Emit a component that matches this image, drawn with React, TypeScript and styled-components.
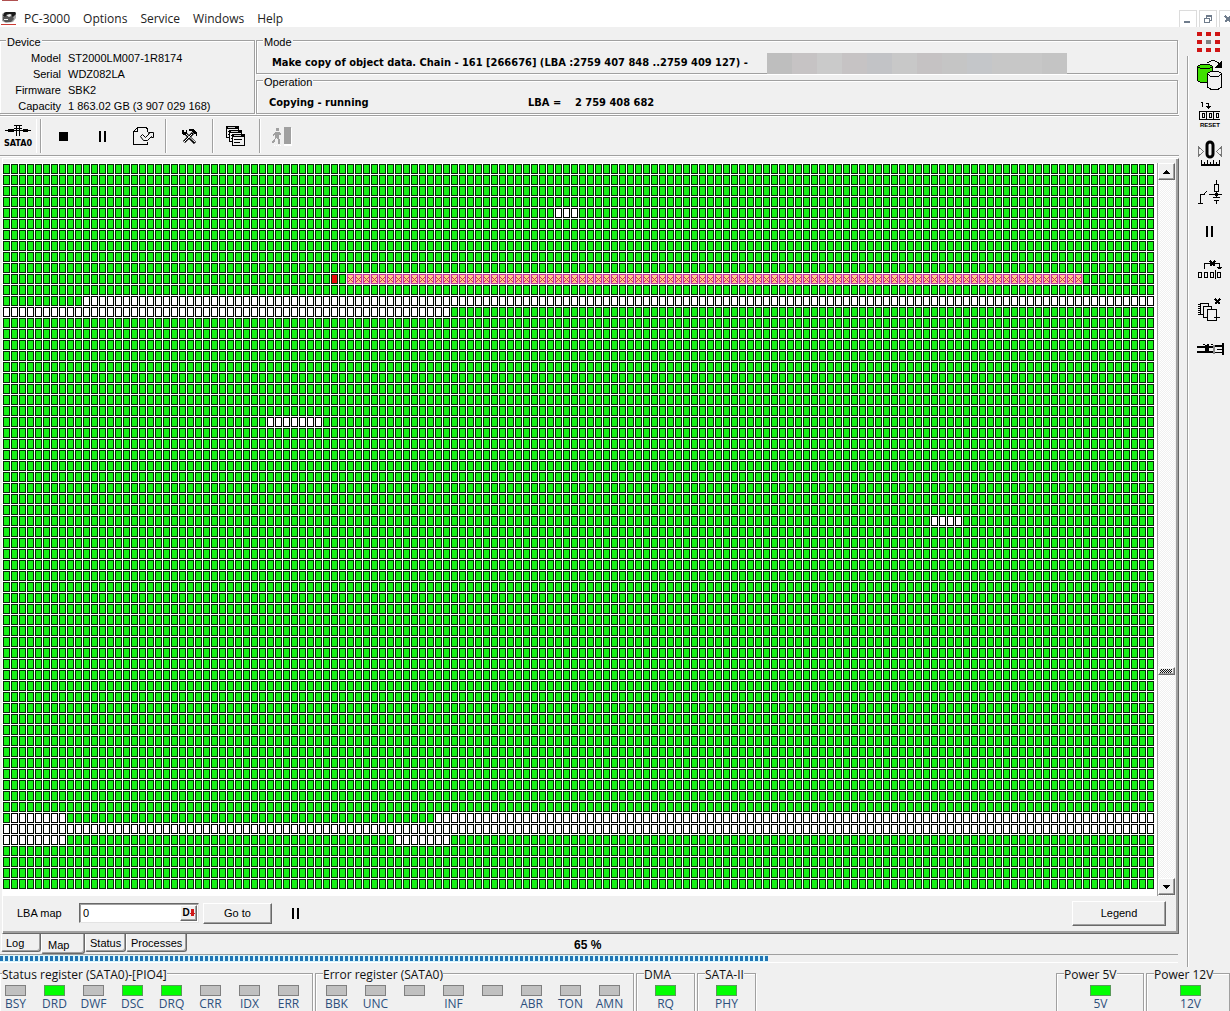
import React from "react";
import styled, { createGlobalStyle } from "styled-components";

const face = "#f0f0f0";
const shade = "#a0a0a0";
const dark = "#696969";
const green = "#16f016";
const uiFont = `"Open Sans", "Noto Sans", sans-serif`;
const sysFont = `"Liberation Sans", Arial, sans-serif`;

const GlobalStyle = createGlobalStyle`
  * { box-sizing: border-box; }
  body { margin: 0; background: ${face}; overflow: hidden; color: #000; font: 11px/16px ${sysFont}; }
  button, input { font: inherit; color: inherit; margin: 0; }
`;

const Window = styled.div`
  display: flex;
  flex-direction: column;
  height: 100vh;
  overflow: hidden;
`;

const MenuBar = styled.header`
  flex: none;
  display: flex;
  align-items: flex-end;
  height: 27px;
  background: #fff;
  overflow: hidden;
`;

const AppMark = styled.div`
  width: 17px;
  height: 27px;
`;

const Menu = styled.nav`
  flex: 1;
  display: flex;
`;

const MenuItem = styled.button`
  border: 0;
  background: none;
  padding: 0 6px 0 7px;
  font: 12px/16px ${uiFont};
  color: #222;
`;

const WindowButtons = styled.div`
  display: flex;
  gap: 2px;
  width: 51px;
  flex: none;
  overflow: hidden;
  height: 17px;
`;

const WindowButton = styled.button`
  flex: none;
  width: 18px;
  height: 18px;
  padding: 0;
  border: 1px solid #dcdcdc;
  border-bottom: 0;
  background: #fff;
`;

const Body = styled.div`
  flex: 1;
  min-height: 0;
  display: flex;
`;

const Main = styled.main`
  flex: 1;
  min-width: 0;
  display: flex;
  flex-direction: column;
`;

const InfoRow = styled.div`
  flex: none;
  display: flex;
  gap: 1px;
  padding: 13px 9px 0 0;
`;

const InfoColumn = styled.div`
  flex: 1;
  display: flex;
  flex-direction: column;
  gap: 6px;
`;

const Group = styled.section<{ $open?: boolean; $width?: number }>`
  border: 1px solid ${shade};
  box-shadow: 1px 1px 0 #fff, inset 1px 1px 0 #fff;
  flex: ${(p) => (p.$width ? "none" : "1")};
  width: ${(p) => (p.$width ? p.$width + "px" : "auto")};
  ${(p) => p.$open && "border-left: 0;"}
`;

const GroupTitle = styled.h2`
  width: fit-content;
  margin: -6px 0 0 6px;
  padding: 0 1px;
  background: ${face};
  font: 11px/14px ${sysFont};
`;

const DeviceList = styled.dl`
  display: grid;
  grid-template-columns: 61px 1fr;
  column-gap: 7px;
  margin: 1px 0 -1px;
`;

const Term = styled.dt`
  text-align: right;
`;

const Value = styled.dd`
  margin: 0;
`;

const BoldLine = styled.p<{ $indent: number }>`
  display: flex;
  height: 24px;
  margin: 0;
  padding-left: ${(p) => p.$indent}px;
  font: bold 11px/28px "DejaVu Sans Condensed", ${sysFont};
  white-space: pre;
`;

const LineCell = styled.span<{ $width?: number }>`
  width: ${(p) => (p.$width ? p.$width + "px" : "auto")};
`;

const Redacted = styled.span`
  width: 300px;
  height: 21px;
  margin-top: 4px;
  background: linear-gradient(
    90deg,
    #bebebe 0 25px, #c6c3c4 25px 50px, #cacaca 50px 75px, #c6c3c4 75px 100px,
    #c2c3c6 100px 125px, #c8c8c8 125px 150px, #c5c2c3 150px 175px, #c5c5c5 175px 200px,
    #c4c6c9 200px 225px, #c7c7c7 225px 275px, #c4c4c4 275px
  );
`;

const Toolbar = styled.div`
  flex: none;
  display: flex;
  align-items: stretch;
  height: 41px;
  margin: 1px 8px 0 0;
  border-top: 1px solid ${shade};
  border-bottom: 1px solid ${shade};
  box-shadow: inset 0 1px 0 #fff, 0 1px 0 #fff;
  padding: 3px 0 2px;
`;

const ToolGroup = styled.div<{ $width: number }>`
  display: flex;
  width: ${(p) => p.$width}px;
  align-items: center;
  justify-content: center;
  border-right: 1px solid ${shade};
  box-shadow: 1px 0 0 #fff;
  &:first-child { justify-content: flex-start; }
  &:last-child { border: 0; box-shadow: none; }
`;

const ToolButton = styled.button<{ $pressed?: boolean }>`
  display: flex;
  flex-direction: column;
  align-items: center;
  justify-content: center;
  gap: 2px;
  width: ${(p) => (p.$pressed ? 37 : 40)}px;
  height: 100%;
  padding: 0;
  border: 0;
  ${(p) => p.$pressed && "border-right: 1px solid #fff;"}
  background: none;
  font: bold 9px/9px "DejaVu Sans Condensed", ${sysFont};
`;

const MapPanel = styled.section`
  flex: 1;
  min-height: 0;
  display: flex;
  flex-direction: column;
  margin: 2px 8px 0 2px;
  padding-top: 4px;
  border-left: 1px solid #fff;
  border-top: 1px solid #fff;
  border-right: 1px solid ${dark};
  border-bottom: 1px solid ${dark};
  box-shadow: inset -2px -2px 0 ${shade};
`;

const MapArea = styled.div`
  flex: 1;
  min-height: 0;
  display: flex;
  justify-content: space-between;
  margin-right: 3px;
  background: #fff;
`;

const MapDrawing = styled.svg`
  flex: none;
  display: block;
  margin-top: 1px;
`;

const ScrollTrack = styled.div`
  flex: none;
  display: flex;
  flex-direction: column;
  width: 18px;
  padding-bottom: 1px;
  border-left: 1px solid ${shade};
  background: repeating-conic-gradient(#fff 0 25%, ${face} 0 50%) 0 0 / 2px 2px;
`;

const ScrollSpace = styled.div<{ $grow: number }>`
  flex: ${(p) => p.$grow} 1 0;
`;

const raised = `
  background: ${face};
  border: 1px solid #fff;
  border-right-color: ${dark};
  border-bottom-color: ${dark};
  box-shadow: inset -1px -1px 0 ${shade};
`;

const ScrollButton = styled.button`
  ${raised}
  flex: none;
  height: 17px;
  padding: 0;
  display: grid;
  place-items: center;
`;

const ScrollThumb = styled.div`
  ${raised}
  height: 8px;
  flex: none;
  padding: 1px 2px 1px 1px;
  &::before {
    content: "";
    display: block;
    height: 4px;
    background: repeating-conic-gradient(#111 0 25%, #eee 0 50%) 0 0 / 2px 2px;
  }
`;

const MapFooter = styled.form`
  flex: none;
  display: flex;
  align-items: center;
  height: 37px;
  padding: 0 12px 3px 14px;
`;

const MapLabel = styled.label`
  width: 62px;
`;

const Field = styled.div`
  display: flex;
  width: 120px;
  height: 20px;
  background: #fff;
  border: 1px solid ${dark};
  border-right-color: #e3e3e3;
  border-bottom-color: #e3e3e3;
  box-shadow: inset 1px 1px 0 ${shade};
  padding: 1px;
`;

const FieldInput = styled.input`
  flex: 1;
  min-width: 0;
  border: 0;
  padding: 0 2px;
  background: none;
  outline: 0;
`;

const FieldButton = styled.button`
  ${raised}
  width: 17px;
  padding: 0;
  font: bold 10px/12px ${sysFont};
  display: flex;
  align-items: center;
  justify-content: center;
`;

const PushButton = styled.button<{ $width: number; $tall?: boolean }>`
  ${raised}
  width: ${(p) => p.$width}px;
  height: ${(p) => (p.$tall ? 25 : 21)}px;
  margin-left: 4px;
  padding: 0;
`;

const FooterIcon = styled.button`
  border: 0;
  padding: 0;
  margin: 0 auto 0 20px;
  background: none;
  display: flex;
`;

const TabRow = styled.div`
  flex: none;
  display: flex;
  align-items: flex-start;
  height: 20px;
  padding-left: 1px;
`;

const Tab = styled.button<{ $width: number; $active?: boolean }>`
  width: ${(p) => p.$width}px;
  height: ${(p) => (p.$active ? 20 : 18)}px;
  padding: ${(p) => (p.$active ? "3px 0 0 6px" : "0 0 0 4px")};
  text-align: left;
  background: ${face};
  border: 0 solid ${dark};
  border-width: 0 1px 1px 0;
  border-left: 1px solid #fff;
  border-radius: 0 0 3px 2px;
  box-shadow: inset -1px -1px 0 ${shade};
`;

const Percent = styled.output`
  flex: 1;
  padding-left: 387px;
  font: bold 12px/22px ${sysFont};
`;

const Progress = styled.div`
  flex: none;
  height: 9px;
  margin: 0 9px 4px 0;
  border-top: 1px solid ${shade};
  border-bottom: 1px solid #fff;
`;

const ProgressFill = styled.div`
  height: 7px;
  border: solid #d8f4fb;
  border-width: 1px 0;
  background: repeating-linear-gradient(90deg, #1f74b4 0 3px, #d8f4fb 3px 5px);
`;

const SideBar = styled.aside`
  flex: none;
  display: flex;
  width: 43px;
  flex-direction: column;
  align-items: center;
`;

const SideFirst = styled.div`
  flex: none;
  height: 29px;
  padding-top: 5px;
`;

const SideTools = styled.div`
  flex: 1;
  width: 100%;
  display: flex;
  flex-direction: column;
  align-items: center;
  padding-left: 2px;
  border-left: 1px solid ${shade};
  box-shadow: inset 1px 0 0 #fff;
`;

const SideButton = styled.button`
  height: 39px;
  padding: 0;
  border: 0;
  background: none;
  display: grid;
  place-items: center;
`;

const StatusBar = styled.footer`
  flex: none;
  display: flex;
  gap: 2px;
  height: 44px;
  padding-top: 6px;
  overflow: hidden;
`;

const LedGroup = styled.section<{ $width: number; $edge?: boolean; $right?: boolean }>`
  flex: none;
  width: ${(p) => p.$width}px;
  height: 50px;
  border: 1px solid ${shade};
  box-shadow: 1px 1px 0 #fff, inset 1px 1px 0 #fff;
  ${(p) => p.$edge && "border-left: 0;"}
  ${(p) => p.$right && "margin-left: auto;"}
`;

const LedTitle = styled.h2<{ $indent: number }>`
  width: fit-content;
  margin: -7px 0 0 ${(p) => p.$indent}px;
  background: ${face};
  font: 12px/15px ${uiFont};
  color: #111;
  white-space: nowrap;
`;

const LedRow = styled.div<{ $start: number }>`
  display: flex;
  padding-top: 3px;
  margin-left: ${(p) => p.$start}px;
`;

const LedItem = styled.div`
  flex: none;
  width: 39px;
  display: flex;
  flex-direction: column;
  align-items: center;
  font: 12px/15px ${uiFont};
  color: #2d4f7c;
`;

const Led = styled.span<{ $on: boolean }>`
  width: 21px;
  height: 11px;
  border: 1px solid ${(p) => (p.$on ? "#5a9a5a" : "#808080")};
  background: ${(p) => (p.$on ? "#00ff00" : "#c0c0c0")};
`;

const COLS = 144;
const ROWS = 66;

type Run = { row: number; from: number; to: number; kind: "unread" | "bad" | "error" };

const runs: Run[] = [
  { row: 4, from: 69, to: 71, kind: "unread" },
  { row: 10, from: 41, to: 41, kind: "error" },
  { row: 10, from: 43, to: 134, kind: "bad" },
  { row: 12, from: 10, to: 143, kind: "unread" },
  { row: 13, from: 0, to: 55, kind: "unread" },
  { row: 23, from: 33, to: 39, kind: "unread" },
  { row: 32, from: 116, to: 119, kind: "unread" },
  { row: 59, from: 1, to: 7, kind: "unread" },
  { row: 59, from: 54, to: 143, kind: "unread" },
  { row: 60, from: 0, to: 143, kind: "unread" },
  { row: 61, from: 0, to: 7, kind: "unread" },
  { row: 61, from: 49, to: 55, kind: "unread" },
];

type CellProps = { id: string; edge: string; fill: string; gap?: string; cross?: boolean };

function CellPattern({ id, edge, fill, gap = "#fff", cross }: CellProps) {
  return (
    <pattern id={id} width="8" height="11" patternUnits="userSpaceOnUse">
      <rect width="8" height="11" fill="#fff" />
      <rect width="8" height="10" fill={gap} />
      <rect width="7" height="10" fill={edge} />
      <rect x="1" y="1" width="5" height="8" fill={fill} />
      {cross && <path d="M1 3h1v1h1v1h1v-1h1v-1h1v1h-1v1h-1v1h1v1h1v1h-1v-1h-1v-1h-1v1h-1v1h-1v-1h1v-1h1v-1h-1v-1h-1z" fill="#cc3058" />}
    </pattern>
  );
}

function SectorMap() {
  return (
    <MapDrawing width={COLS * 8} height={ROWS * 11} shapeRendering="crispEdges" role="img" aria-label="LBA map">
      <defs>
        <CellPattern id="read" edge="#062a06" fill={green} />
        <CellPattern id="unread" edge="#000" fill="#fff" />
        <CellPattern id="error" edge="#062a06" fill="#e80c0c" />
        <CellPattern id="bad" edge="#c42c9c" fill="#fcc88c" gap="#f4b8e0" cross />
      </defs>
      <rect width="100%" height="100%" fill="url(#read)" />
      {runs.map((r) => (
        <rect
          key={`${r.row}-${r.from}`}
          x={r.from * 8}
          y={r.row * 11}
          width={(r.to - r.from + 1) * 8}
          height="11"
          fill={`url(#${r.kind})`}
        />
      ))}
    </MapDrawing>
  );
}

function Icon({ w, h, children }: { w: number; h: number; children: React.ReactNode }) {
  return (
    <svg width={w} height={h} viewBox={`0 0 ${w} ${h}`} fill="none" stroke="#000" shapeRendering="crispEdges" aria-hidden="true">
      {children}
    </svg>
  );
}

const PauseIcon = () => (
  <Icon w={8} h={11}><path d="M0 0h2v11h-2zM5 0h2v11h-2z" fill="#000" stroke="none" /></Icon>
);

const AppIcon = () => (
  <svg width="18" height="27" viewBox="0 0 18 27" aria-hidden="true">
    <path d="M2 0h16v1H2z" fill="#b05050" />
    <path d="M2 14l3-2h11v6l-3 4-7 1-4-2z" fill="#aaa" />
    <path d="M4 13l2-1h9l1 2-3 3-3-1-4 2-3-2z" fill="#1a1a1a" />
    <path d="M3 17l4-1 6 1 1 2-3 3H5l-2-2z" fill="#555" />
    <path d="M6 15l4-1 2 1-3 2zM4 19h4v1H4z" fill="#eee" />
    <path d="M1 24h15v1H1z" fill="#cc3b33" />
  </svg>
);

const SataIcon = () => (
  <Icon w={28} h={13}>
    <path d="M1 6h26v1H1zM4 5h6v3H4zM19 5h5v3h-5z" fill="#000" stroke="none" />
    <path d="M10 1.500h8M12.500 1v11M15.500 1v11M10 4.500h8" />
  </Icon>
);

const CopyDocIcon = () => (
  <Icon w={21} h={20}>
    <path d="M14.500 6V2.500h-1v-1h-9l-4 4v13h14v-3M4.500 1.500v4h-4" />
    <path d="M7.500 10.500l2-2 3 3 4-4h-1v-1h5v5h-2v-1l-4 4h-4l-3-4z" fill="#f0f0f0" shapeRendering="auto" />
  </Icon>
);

const ToolsIcon = () => (
  <Icon w={17} h={16}>
    <path d="M4 5l10 10M12 5L3 14" strokeWidth="3" shapeRendering="auto" />
    <path d="M5 6l9 8M11 6l-8 8" stroke="#fff" shapeRendering="auto" />
    <path d="M1 2h2v2h2V2h1v3L4 7H2L1 5zM8 1h4l4 4v3h-1V6h-2l-2-3H8z" fill="#000" stroke="none" />
  </Icon>
);

const WindowsIcon = () => (
  <Icon w={20} h={20}>
    {[[0, 0], [3, 4], [6, 8]].map(([x, y]) => (
      <g key={x}>
        <path d={`M${x + 0.5} ${y + 0.5}h12v11h-12z`} fill="#f0f0f0" />
        <path d={`M${x} ${y + 0.5}h13M${x} ${y + 1.5}h13M${x} ${y + 2.5}h13`} />
        <path d={`M${x + 2} ${y + 1.5}h7`} stroke="#ccc" />
        <path d={`M${x + 2} ${y + 5.5}h8M${x + 2} ${y + 8.5}h6`} />
      </g>
    ))}
  </Icon>
);

const ExitIcon = () => (
  <Icon w={20} h={19}>
    <path d="M12 1h8v18h-8z" fill="#fff" stroke="none" />
    <path d="M12 0h7v17h-7zM4 1h3v3H4zM3 5h4l2 2v1H7v3l1 2v4H6v-4l-2-2-1 3-2 2H0v-2l3-3V7L1 9V7z" fill="#a0a0a0" stroke="none" />
    <path d="M2 18h7" stroke="#fff" strokeDasharray="1 1" />
  </Icon>
);

const LedsIcon = () => (
  <Icon w={24} h={21}>
    {[0, 8, 16].map((y) =>
      [0, 9, 18].map((x) => (
        <rect key={`${x}-${y}`} x={x} y={y} width="5" height="4" stroke="none" fill={x === 9 && y === 8 ? "#808080" : "#d01414"} />
      ))
    )}
  </Icon>
);

const DisksIcon = () => (
  <Icon w={26} h={31}>
    <path d="M.5 6.500v14l3 2h9l3-2v-14z" fill="#3fe000" />
    <path d="M3.500 4.500h9l3 2-3 2h-9l-3-2z" fill="#3fe000" />
    <path d="M10.500 14v13l3 2h8l3-2V14z" fill="#f0f0f0" />
    <path d="M13.500 11.500h8l3 2-3 3h-8l-3-3z" fill="#f0f0f0" />
    <path d="M10 2.500h2M12 1.500h2M14 .5h4M18 1.500h2M20 2.500h2M21 3.500h2" />
    <path d="M25 0v8h-7z" fill="#000" stroke="none" />
  </Icon>
);

const ResetText = styled.text`
  font: bold 6px ${sysFont};
  fill: #000;
  stroke: none;
`;

const ResetIcon = () => (
  <Icon w={24} h={28}>
    <path d="M3 1.500h2M4.500 1v5M8 2.500h2.500v5M8 5.500h5M9 6.500h3" />
    <path d="M22 10.500H1.500v8H22M8.500 10v8M15.500 10v8" />
    <path d="M4 12.500h2v4h-2zM11 12.500h2v4h-2zM18 12.500h2v4h-2z" />
    <ResetText x="2" y="26">RESET</ResetText>
  </Icon>
);

const ZeroIcon = () => (
  <Icon w={24} h={28}>
    <path d="M.5 7v9l5-4.500zM23.500 7v9l-5-4.500z" stroke="#777" />
    <rect x="9" y="2" width="6" height="15" rx="3" strokeWidth="3" shapeRendering="auto" />
    <path d="M3 24.500h19M3 25.500h19M3.500 20v4M6.500 22v2M9.500 20v4M12.500 22v2M15.500 20v4M18.500 22v2M21.500 20v4" />
  </Icon>
);

const SwitchIcon = () => (
  <Icon w={24} h={26}>
    <path d="M18.500 0v4M16.500 4.500h4v7h-4zM18.500 12v5M11 14.500h13M15 17.500h7M16 20.500h5M18.500 20v4" />
    <path d="M17 13h3v3h-3z" fill="#000" stroke="none" />
    <path d="M0 23.500h5M2.500 23v-9h4M6.500 14v-1M7.500 13v-1M8.500 12v-1" />
  </Icon>
);

const SkipIcon = () => (
  <Icon w={24} h={21}>
    <path d="M6.500 9V3.500h15V8M19 7.500h5M20 8.500h3" />
    <path d="M12 1l5 5M17 1l-5 5" strokeWidth="2" />
    <path d="M.5 12.500h3v5h-3zM6.500 12.500h3v5h-3zM12.500 12.500h3v5h-3zM19.500 12.500h3v5h-3zM17.500 10v9" />
  </Icon>
);

const PagesIcon = () => (
  <Icon w={24} h={24}>
    <path d="M2.500 5.500h8v11h-8z" fill="#f0f0f0" />
    <path d="M5.500 8.500h8v11h-8z" fill="#f0f0f0" />
    <path d="M9.500 11.500h9v11h-9z" fill="#f0f0f0" />
    <path d="M0 6.500h3M0 8.500h3M0 10.500h3M0 12.500h3M0 14.500h3M0 16.500h3M16 19.500h6M18.500 17v5" />
    <path d="M17 1l5 5M22 1l-5 5" strokeWidth="2" />
  </Icon>
);

const PlugIcon = () => (
  <Icon w={27} h={14}>
    <path d="M0 4h16v2H0zM0 9h16v2H0zM8 3h4v8H8zM6 2h2v1H6zM10 2h2v1h-2zM14 2h2v1h-2z" fill="#000" stroke="none" />
    <path d="M16 3h2v9h-2z" fill="#888" stroke="none" />
    <path d="M18 3h7v2h-7zM18 10h7v1h-7zM20 7h5v1h-5zM25 1h2v12h-2z" fill="#000" stroke="none" />
  </Icon>
);

const device = [
  ["Model", "ST2000LM007-1R8174"],
  ["Serial", "WDZ082LA"],
  ["Firmware", "SBK2"],
  ["Capacity", "1 863.02 GB (3 907 029 168)"],
];

const sideTools = [
  ["Copy disk", DisksIcon],
  ["Reset", ResetIcon],
  ["Recalibrate", ZeroIcon],
  ["Power", SwitchIcon],
  ["Pause", PauseIcon],
  ["Skip", SkipIcon],
  ["Pages", PagesIcon],
  ["Connector", PlugIcon],
] as const;

type Bit = [string, boolean];
const statusBits: Bit[] = [["BSY", false], ["DRD", true], ["DWF", false], ["DSC", true], ["DRQ", true], ["CRR", false], ["IDX", false], ["ERR", false]];
const errorBits: Bit[] = [["BBK", false], ["UNC", false], ["", false], ["INF", false], ["", false], ["ABR", false], ["TON", false], ["AMN", false]];

type LedsProps = { title: string; bits: Bit[]; width: number; start: number; indent?: number; edge?: boolean; right?: boolean };

function Leds({ title, bits, width, start, indent = 7, edge, right }: LedsProps) {
  return (
    <LedGroup $width={width} $edge={edge} $right={right}>
      <LedTitle $indent={indent}>{title}</LedTitle>
      <LedRow $start={start}>
        {bits.map(([name, on], i) => (
          <LedItem key={i}>
            <Led $on={on} />
            {name}
          </LedItem>
        ))}
      </LedRow>
    </LedGroup>
  );
}

export default function App() {
  const progress = 65;
  return (
    <Window>
      <GlobalStyle />
      <MenuBar>
        <AppMark><AppIcon /></AppMark>
        <Menu>
          {["PC-3000", "Options", "Service", "Windows", "Help"].map((m) => <MenuItem key={m}>{m}</MenuItem>)}
        </Menu>
        <WindowButtons>
          <WindowButton aria-label="Minimize"><Icon w={16} h={16}><path d="M4 10h6v2H4z" fill="#6f7c8c" stroke="none" /></Icon></WindowButton>
          <WindowButton aria-label="Restore"><Icon w={16} h={16}><path d="M4.500 7.500h5v4h-5zM6.500 7V4.500h5v5H10M4 7.500h6M6 5.500h6" stroke="#6f7c8c" /></Icon></WindowButton>
          <WindowButton aria-label="Close"><Icon w={16} h={16}><path d="M5 5l6 6M11 5l-6 6" stroke="#6f7c8c" strokeWidth="2" /></Icon></WindowButton>
        </WindowButtons>
      </MenuBar>
      <Body>
        <Main>
          <InfoRow>
            <Group $width={255} $open>
              <GroupTitle>Device</GroupTitle>
              <DeviceList>
                {device.map(([k, v]) => (
                  <React.Fragment key={k}><Term>{k}</Term><Value>{v}</Value></React.Fragment>
                ))}
              </DeviceList>
            </Group>
            <InfoColumn>
              <Group>
                <GroupTitle>Mode</GroupTitle>
                <BoldLine $indent={15}>
                  <LineCell $width={495}>
                    Make copy of object data. Chain - 161 [266676] (LBA :2759 407 848 ..2759 409 127) -
                  </LineCell>
                  <Redacted />
                </BoldLine>
              </Group>
              <Group>
                <GroupTitle>Operation</GroupTitle>
                <BoldLine $indent={12}>
                  <LineCell $width={259}>Copying - running</LineCell>
                  <LineCell $width={47}>LBA =</LineCell>
                  <LineCell>2 759 408 682</LineCell>
                </BoldLine>
              </Group>
            </InfoColumn>
          </InfoRow>
          <Toolbar>
            <ToolGroup $width={41}><ToolButton $pressed><SataIcon />SATA0</ToolButton></ToolGroup>
            <ToolGroup $width={125}>
              <ToolButton aria-label="Stop"><Icon w={9} h={9}><path d="M0 0h9v9H0z" fill="#000" stroke="none" /></Icon></ToolButton>
              <ToolButton aria-label="Pause"><PauseIcon /></ToolButton>
              <ToolButton aria-label="Copy"><CopyDocIcon /></ToolButton>
            </ToolGroup>
            <ToolGroup $width={47}><ToolButton aria-label="Tools"><ToolsIcon /></ToolButton></ToolGroup>
            <ToolGroup $width={47}><ToolButton aria-label="Windows"><WindowsIcon /></ToolButton></ToolGroup>
            <ToolGroup $width={44}><ToolButton aria-label="Exit"><ExitIcon /></ToolButton></ToolGroup>
          </Toolbar>
          <MapPanel>
            <MapArea>
              <SectorMap />
              <ScrollTrack>
                <ScrollButton aria-label="Scroll up"><Icon w={8} h={4}><path d="M3 0h1v1h1v1h1v1h1v1H0V3h1V2h1V1h1z" fill="#000" stroke="none" /></Icon></ScrollButton>
                <ScrollSpace $grow={487} />
                <ScrollThumb />
                <ScrollSpace $grow={203} />
                <ScrollButton aria-label="Scroll down"><Icon w={8} h={4}><path d="M0 0h7v1H6v1H5v1H4v1H3V3H2V2H1V1H0z" fill="#000" stroke="none" /></Icon></ScrollButton>
              </ScrollTrack>
            </MapArea>
            <MapFooter onSubmit={(e) => e.preventDefault()}>
              <MapLabel htmlFor="lba">LBA map</MapLabel>
              <Field>
                <FieldInput id="lba" defaultValue="0" />
                <FieldButton type="button">
                  D
                  <Icon w={5} h={8}><path d="M1 0h3v4h1v1H4v2H1V5H0V4h1z" fill="#d01818" stroke="none" /></Icon>
                </FieldButton>
              </Field>
              <PushButton $width={69}>Go to</PushButton>
              <FooterIcon type="button" aria-label="Pause map"><PauseIcon /></FooterIcon>
              <PushButton type="button" $width={94} $tall>Legend</PushButton>
            </MapFooter>
          </MapPanel>
          <TabRow>
            <Tab $width={40}>Log</Tab>
            <Tab $width={44} $active>Map</Tab>
            <Tab $width={41}>Status</Tab>
            <Tab $width={61}>Processes</Tab>
            <Percent>{progress} %</Percent>
          </TabRow>
          <Progress role="progressbar" aria-valuenow={progress}>
            <ProgressFill style={{ width: `${progress}.2%` }} />
          </Progress>
        </Main>
        <SideBar>
          <SideFirst><LedsIcon /></SideFirst>
          <SideTools>
            {sideTools.map(([name, Glyph]) => <SideButton key={name} aria-label={name}><Glyph /></SideButton>)}
          </SideTools>
        </SideBar>
      </Body>
      <StatusBar>
        <Leds title="Status register (SATA0)-[PIO4]" bits={statusBits} width={313} start={-4} indent={2} edge />
        <Leds title="Error register (SATA0)" bits={errorBits} width={319} start={1} />
        <Leds title="DMA" bits={[["RQ", true]]} width={59} start={9} />
        <Leds title="SATA-II" bits={[["PHY", true]]} width={59} start={9} />
        <Leds title="Power 5V" bits={[["5V", true]]} width={88} start={24} right />
        <Leds title="Power 12V" bits={[["12V", true]]} width={84} start={24} />
      </StatusBar>
    </Window>
  );
}
